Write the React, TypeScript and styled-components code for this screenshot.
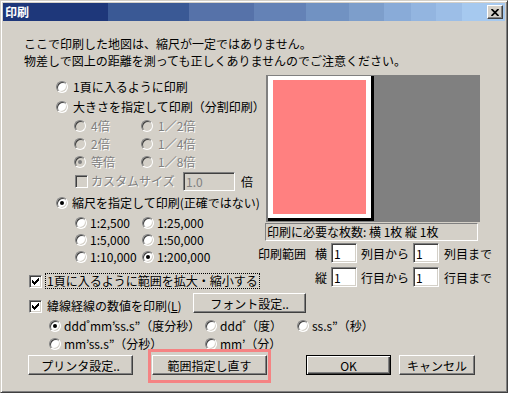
import React from 'react';
import styled, { createGlobalStyle } from 'styled-components';

const Global = createGlobalStyle`
  html, body { margin: 0; padding: 0; background: #d4d0c8; }
  body {
    font-family: "Noto Sans CJK JP", "Noto Sans", sans-serif;
    font-size: 12px;
    color: #000;
  }
  * { box-sizing: border-box; }
`;

const Window = styled.div`
  width: 508px;
  height: 393px;
  background: #d4d0c8;
  border: 1px solid;
  border-color: #d4d0c8 #404040 #404040 #d4d0c8;
  box-shadow: inset 1px 1px #fff, inset -1px -1px #808080;
  padding: 2px;
  display: flex;
  flex-direction: column;
  overflow: hidden;
`;

const TitleBar = styled.div`
  height: 18px;
  flex: none;
  display: flex;
  align-items: center;
  justify-content: space-between;
  padding: 0 2px 0 2px;
  background: linear-gradient(
    90deg,
    #1e377a 0 105px,
    #3a5995 105px 186px,
    #5672a9 186px 251px,
    #6482b6 251px 303px,
    #7192c2 303px 346px,
    #7d9ecb 346px 381px,
    #89abd8 381px 408px,
    #93b5e0 408px 433px,
    #9cbee7 433px 459px,
    #a6c9ef 459px
  );
`;

const Title = styled.span`
  color: #fff;
  font-weight: bold;
  font-size: 12px;
  line-height: 16px;
`;

const CloseButton = styled.div`
  width: 16px;
  height: 14px;
  background: #d4d0c8;
  border: 1px solid;
  border-color: #fff #404040 #404040 #fff;
  box-shadow: inset -1px -1px #808080;
  display: flex;
  align-items: center;
  justify-content: center;
`;

const Body = styled.div`
  padding: 14px 0 0 21px;
  display: flex;
  flex-direction: column;
  white-space: nowrap;
`;

const Notice = styled.p`
  margin: 0;
  line-height: 17px;
`;

const Columns = styled.div`
  display: flex;
  margin-top: 6px;
`;

const LeftCol = styled.div`
  width: 234px;
  flex: none;
  padding-top: 2px;
  display: flex;
  flex-direction: column;
`;

const RightCol = styled.div`
  flex: 1;
  display: flex;
  flex-direction: column;
`;

const Row = styled.div<{ $h: number; $indent: number; $pt?: number; $mt?: number }>`
  height: ${(p) => p.$h}px;
  padding-left: ${(p) => p.$indent}px;
  padding-top: ${(p) => p.$pt ?? 0}px;
  margin-top: ${(p) => p.$mt ?? 0}px;
  display: flex;
  align-items: center;
`;

const OptionGrid = styled.div<{ $row: number; $indent: number; $cols: string; $mt?: number }>`
  display: grid;
  grid-template-columns: ${(p) => p.$cols};
  grid-auto-rows: ${(p) => p.$row}px;
  align-items: center;
  padding-left: ${(p) => p.$indent}px;
  margin-top: ${(p) => p.$mt ?? 0}px;
`;

const Option = styled.label<{ $gap: number; $w?: number; $bottom?: boolean }>`
  display: inline-flex;
  align-items: center;
  gap: ${(p) => p.$gap}px;
  width: ${(p) => (p.$w ? `${p.$w}px` : 'auto')};
  align-self: ${(p) => (p.$bottom ? 'flex-end' : 'auto')};
  height: 14px;
`;

const Text = styled.span<{ $disabled?: boolean; $focus?: boolean }>`
  line-height: 14px;
  color: ${(p) => (p.$disabled ? '#808080' : '#000')};
  text-shadow: ${(p) => (p.$disabled ? '1px 1px 0 #fff' : 'none')};
  outline: ${(p) => (p.$focus ? '1px dotted #000' : 'none')};
  padding: ${(p) => (p.$focus ? '0 1px' : '0')};
`;

const RadioCircle = styled.span<{ $checked?: boolean; $disabled?: boolean }>`
  width: 12px;
  height: 12px;
  flex: none;
  border-radius: 50%;
  background: ${(p) => (p.$disabled ? '#d4d0c8' : '#fff')};
  border: 1px solid;
  border-color: #808080 #fff #fff #808080;
  box-shadow: inset 1px 1px #404040, inset -1px -1px #d4d0c8;
  display: inline-flex;
  align-items: center;
  justify-content: center;
  &::after {
    content: '';
    width: 4px;
    height: 4px;
    border-radius: 50%;
    background: ${(p) => (p.$disabled ? '#808080' : '#000')};
    display: ${(p) => (p.$checked ? 'block' : 'none')};
  }
`;

const CheckBox = styled.span<{ $disabled?: boolean }>`
  width: 13px;
  height: 13px;
  flex: none;
  background: ${(p) => (p.$disabled ? '#d4d0c8' : '#fff')};
  border: 1px solid;
  border-color: #808080 #fff #fff #808080;
  box-shadow: inset 1px 1px #404040, inset -1px -1px #d4d0c8;
  display: inline-flex;
  align-items: center;
  justify-content: center;
`;

const Field = styled.input<{ $w: number; $h: number; $disabled?: boolean }>`
  width: ${(p) => p.$w}px;
  height: ${(p) => p.$h}px;
  flex: none;
  margin: 0;
  padding: 0 2px;
  font: inherit;
  font-size: 12px;
  color: ${(p) => (p.$disabled ? '#808080' : '#000')};
  background: ${(p) => (p.$disabled ? '#d4d0c8' : '#fff')};
  border: 1px solid;
  border-color: #808080 #fff #fff #808080;
  box-shadow: inset 1px 1px #404040, inset -1px -1px #d4d0c8;
  outline: none;
`;

const Suffix = styled.span<{ $ml: number; $disabled?: boolean }>`
  margin-left: ${(p) => p.$ml}px;
  color: ${(p) => (p.$disabled ? '#808080' : '#000')};
`;

const Preview = styled.div`
  margin-left: 8px;
  width: 214px;
  height: 147px;
  background: #808080;
  padding: 1px 0 0 2px;
`;

const Paper = styled.div`
  width: 106px;
  height: 145px;
  background: #fff;
  border-right: 3px solid #000;
  border-bottom: 3px solid #000;
  padding: 4px 5px;
`;

const PrintArea = styled.div`
  width: 100%;
  height: 100%;
  background: #ff8080;
`;

const Status = styled.div`
  margin: 1px 0 0 7px;
  width: 213px;
  height: 18px;
  border: 1px solid;
  border-color: #808080 #fff #fff #808080;
  padding-left: 1px;
  line-height: 16px;
`;

const RangeRow = styled.div<{ $mt: number }>`
  display: flex;
  align-items: center;
  height: 20px;
  margin-top: ${(p) => p.$mt}px;
`;

const RangeLabel = styled.span`
  width: 57px;
  flex: none;
`;

const Axis = styled.span`
  width: 16px;
  flex: none;
`;

const Unit = styled.span<{ $ml: number; $w?: number }>`
  margin-left: ${(p) => p.$ml}px;
  width: ${(p) => (p.$w ? `${p.$w}px` : 'auto')};
  flex: none;
`;

const Button = styled.button<{ $w: number; $ml?: number; $default?: boolean }>`
  width: ${(p) => p.$w}px;
  height: 20px;
  margin: 0 0 0 ${(p) => p.$ml ?? 0}px;
  padding: 0;
  font: inherit;
  font-size: 12px;
  color: #000;
  background: #d4d0c8;
  border: 1px solid;
  border-color: ${(p) => (p.$default ? '#000' : '#fff #404040 #404040 #fff')};
  box-shadow: ${(p) =>
    p.$default
      ? 'inset 1px 1px #fff, inset -1px -1px #404040, inset -2px -2px #808080'
      : 'inset -1px -1px #808080'};
  flex: none;
`;

const ButtonRow = styled.div`
  display: flex;
  align-items: center;
  height: 20px;
  margin-top: 2px;
  padding-left: 4px;
`;

const HighlightWrap = styled.div`
  position: relative;
  display: flex;
  margin-left: 19px;
`;

const Highlight = styled.span`
  position: absolute;
  top: -6px;
  bottom: -8px;
  left: -4px;
  right: -4px;
  border: 3px solid #f58383;
  pointer-events: none;
`;

const Check = () => (
  <svg width="7" height="7" viewBox="0 0 7 7" shapeRendering="crispEdges">
    <path d="M0 2 L2 4 L6 0 L7 0 L7 2 L2 7 L0 5 Z" fill="#000" />
  </svg>
);

const Radio = ({
  label,
  checked,
  disabled,
  gap = 5,
  w,
}: {
  label: React.ReactNode;
  checked?: boolean;
  disabled?: boolean;
  gap?: number;
  w?: number;
}) => (
  <Option $gap={gap} $w={w}>
    <RadioCircle $checked={checked} $disabled={disabled} />
    <Text $disabled={disabled}>{label}</Text>
  </Option>
);

export default function App() {
  return (
    <>
      <Global />
      <Window>
        <TitleBar>
          <Title>印刷</Title>
          <CloseButton>
            <svg width="8" height="7" viewBox="0 0 8 7">
              <path d="M0.5 0 L7.5 7 M7.5 0 L0.5 7" stroke="#000" strokeWidth="1.7" />
            </svg>
          </CloseButton>
        </TitleBar>
        <Body>
          <Notice>ここで印刷した地図は、縮尺が一定ではありません。</Notice>
          <Notice>物差しで図上の距離を測っても正しくありませんのでご注意ください。</Notice>
          <Columns>
            <LeftCol>
              <Row $h={20} $indent={32}>
                <Radio label="1頁に入るように印刷" />
              </Row>
              <Row $h={20} $indent={32}>
                <Radio label="大きさを指定して印刷（分割印刷）" />
              </Row>
              <OptionGrid $row={18} $indent={50} $cols="67px auto">
                <Radio label="4倍" disabled />
                <Radio label="1／2倍" disabled />
                <Radio label="2倍" disabled />
                <Radio label="1／4倍" disabled />
                <Radio label="等倍" disabled checked />
                <Radio label="1／8倍" disabled />
              </OptionGrid>
              <Row $h={20} $indent={51}>
                <Option $gap={3} $w={108}>
                  <CheckBox $disabled />
                  <Text $disabled>カスタムサイズ</Text>
                </Option>
                <Field $w={52} $h={19} $disabled readOnly defaultValue="1.0" />
                <Suffix $ml={6}>倍</Suffix>
              </Row>
              <Row $h={23} $indent={32}>
                <Radio label="縮尺を指定して印刷(正確ではない)" checked gap={4} />
              </Row>
              <OptionGrid $row={17} $indent={51} $cols="67px auto">
                <Radio label="1:2,500" gap={3} />
                <Radio label="1:25,000" gap={3} />
                <Radio label="1:5,000" gap={3} />
                <Radio label="1:50,000" gap={3} />
                <Radio label="1:10,000" gap={3} />
                <Radio label="1:200,000" checked gap={3} />
              </OptionGrid>
              <Row $h={24} $pt={8} $indent={5}>
                <Option $gap={4}>
                  <CheckBox>
                    <Check />
                  </CheckBox>
                  <Text $focus>1頁に入るように範囲を拡大・縮小する</Text>
                </Option>
              </Row>
            </LeftCol>
            <RightCol>
              <Preview>
                <Paper>
                  <PrintArea />
                </Paper>
              </Preview>
              <Status>印刷に必要な枚数: 横 1枚 縦 1枚</Status>
              <RangeRow $mt={2}>
                <RangeLabel>印刷範囲</RangeLabel>
                <Axis>横</Axis>
                <Field $w={26} $h={20} readOnly defaultValue="1" />
                <Unit $ml={4} $w={48}>列目から</Unit>
                <Unit $ml={4}>
                  <Field $w={26} $h={20} readOnly defaultValue="1" />
                </Unit>
                <Unit $ml={5}>列目まで</Unit>
              </RangeRow>
              <RangeRow $mt={4}>
                <RangeLabel />
                <Axis>縦</Axis>
                <Field $w={26} $h={20} readOnly defaultValue="1" />
                <Unit $ml={4} $w={48}>行目から</Unit>
                <Unit $ml={4}>
                  <Field $w={26} $h={20} readOnly defaultValue="1" />
                </Unit>
                <Unit $ml={5}>行目まで</Unit>
              </RangeRow>
            </RightCol>
          </Columns>
          <Row $h={20} $mt={4} $indent={5}>
            <Option $gap={5} $w={164} $bottom>
              <CheckBox>
                <Check />
              </CheckBox>
              <Text>
                緯線経線の数値を印刷(<u>L</u>)
              </Text>
            </Option>
            <Button $w={113}>フォント設定..</Button>
          </Row>
          <OptionGrid $row={18} $indent={25} $cols="156px 92px auto" $mt={4}>
            <Radio label="ddd˚mm’ss.s”（度分秒）" checked gap={3} />
            <Radio label="ddd˚（度）" gap={3} />
            <Radio label="ss.s”（秒）" gap={3} />
            <Radio label="mm’ss.s”（分秒）" gap={3} />
            <Radio label="mm’（分）" gap={3} />
          </OptionGrid>
          <ButtonRow>
            <Button $w={105}>プリンタ設定..</Button>
            <HighlightWrap>
              <Button $w={115}>範囲指定し直す</Button>
              <Highlight />
            </HighlightWrap>
            <Button $w={85} $ml={39} $default>
              OK
            </Button>
            <Button $w={76} $ml={8}>
              キャンセル
            </Button>
          </ButtonRow>
        </Body>
      </Window>
    </>
  );
}
